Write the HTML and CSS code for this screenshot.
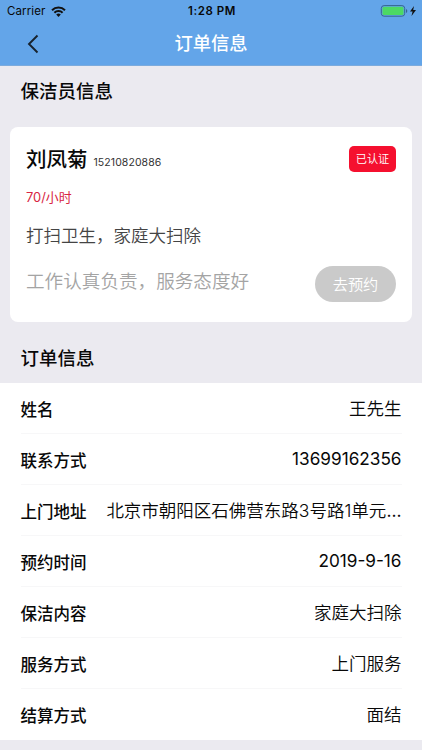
FILE: index.html
```html
<!DOCTYPE html>
<html lang="zh-CN">
<head>
<meta charset="utf-8">
<title>订单信息</title>
<link rel="stylesheet" href="styles.css">
</head>
<body>
<header class="top">
  <div class="status">
    <div class="carrier"><span>Carrier</span>
      <svg width="15" height="11" viewBox="0 0 15 11"><g fill="none" stroke="#111" stroke-width="2"><path d="M1 4.200a9.300 9.300 0 0 1 13 0"/><path d="M3.400 6.800a5.800 5.800 0 0 1 8.200 0"/></g><path d="M5.200 8.600a3.200 3.200 0 0 1 4.600 0L7.500 11z" fill="#111"/></svg>
    </div>
    <div class="time">1:28 PM</div>
    <div class="power">
      <svg width="37" height="12" viewBox="0 0 37 12"><rect x="1.300" y=".6" width="23.400" height="10.600" rx="2.800" fill="none" stroke="#36658f"/><rect x="2.500" y="1.800" width="21" height="8.200" rx="1.600" fill="#4cd964"/><path d="M26 4v4q1.300-.5 1.300-2t-1.300-2z" fill="#36658f"/><path d="M34 1l-4 5.500h2.600L31.500 11l4.500-6h-2.800z" fill="#111"/></svg>
    </div>
  </div>
  <nav class="nav">
    <svg class="back" width="12" height="20" viewBox="0 0 12 20"><path d="M10.500 1.500L2 10l8.500 8.500" fill="none" stroke="#17222d" stroke-width="1.900"/></svg>
    <h1>订单信息</h1>
  </nav>
</header>
<main>
  <h2 class="first">保洁员信息</h2>
  <section class="card">
    <div class="person"><strong>刘凤菊</strong><span class="phone">15210820886</span><span class="badge">已认证</span></div>
    <div class="price">70/小时</div>
    <div class="skill">打扫卫生，家庭大扫除</div>
    <div class="foot"><span class="intro">工作认真负责，服务态度好</span><button>去预约</button></div>
  </section>
  <h2 class="second">订单信息</h2>
  <dl class="list">
    <div class="row"><dt>姓名</dt><dd>王先生</dd></div>
    <div class="row"><dt>联系方式</dt><dd class="number">13699162356</dd></div>
    <div class="row"><dt>上门地址</dt><dd>北京市朝阳区石佛营东路3号路1单元<span class="more">...</span></dd></div>
    <div class="row"><dt>预约时间</dt><dd class="number">2019-9-16</dd></div>
    <div class="row"><dt>保洁内容</dt><dd>家庭大扫除</dd></div>
    <div class="row"><dt>服务方式</dt><dd>上门服务</dd></div>
    <div class="row"><dt>结算方式</dt><dd>面结</dd></div>
  </dl>
</main>
</body>
</html>
```
FILE: styles.css
```css
* { box-sizing: border-box; }
body { margin: 0; height: 750px; overflow: hidden; background: #ebeaf0; color: #080808; font-family: Inter, "Noto Sans CJK SC", sans-serif; }
svg { display: block; }
.top { height: 66px; background: #63a5e9; border-bottom: 1px solid #7cabdd; }
.status { height: 22px; display: grid; grid-template-columns: 1fr auto 1fr; align-items: center; padding: 0 5px 0 7px; font-size: 11.500px; }
.carrier { display: flex; align-items: center; gap: 6px; letter-spacing: .1px; }
.time { font-weight: 600; letter-spacing: .55px; }
.power { justify-self: end; }
.nav { height: 43px; display: grid; grid-template-columns: 40px 1fr 40px; align-items: center; }
.back { margin-left: 27px; }
h1 { margin: 0; color: #fff; text-align: center; font-size: 18.300px; line-height: 43px; font-weight: 500; }
h2 { margin: 0; padding-left: 20.500px; font-size: 18.500px; font-weight: 500; }
.first { height: 60.500px; line-height: 51px; }
.second { height: 61px; line-height: 73px; }
.card { margin: 0 10.500px 0 10px; height: 195.500px; padding: 16.500px 15.500px 0 16px; border-radius: 8px; background: #fff; }
.person { height: 34px; display: flex; align-items: center; }
.person strong { font-size: 20.500px; line-height: 34px; font-weight: 500; }
.phone { margin: 4px auto 0 6px; font-size: 10.500px; letter-spacing: .08px; color: #333; }
.badge { width: 47px; height: 26px; margin-top: -2px; border-radius: 5px; background: #f5102f; color: #fff; text-align: center; font-size: 11.200px; font-weight: 350; line-height: 26px; }
.price { height: 39px; line-height: 41px; color: #d82542; font-size: 12.900px; }
.skill { height: 38px; line-height: 40px; color: #444; font-size: 17.500px; font-weight: 350; }
.foot { display: flex; justify-content: space-between; height: 50px; }
.intro { color: #a4a4a4; font-size: 18.600px; font-weight: 350; line-height: 54px; }
button { width: 81px; height: 36px; margin-top: 12px; padding: 0 0 2px; border: 0; border-radius: 18px; background: #cacaca; color: #fff; font: 350 15.200px "Noto Sans CJK SC", sans-serif; }
.list { margin: 0; height: 357px; background: #fff; }
.row { height: 51px; margin: 0 20.500px; display: flex; align-items: center; justify-content: space-between; border-bottom: 1px solid #f7f7f8; white-space: nowrap; }
.row:last-child { border-color: transparent; }
dt { padding-top: 1px; font-size: 16.500px; font-weight: 500; }
dd { margin: 0; padding-bottom: 1px; font-size: 17.500px; font-weight: 350; }
.number { padding: 0 0 1px; font-size: 17.200px; font-weight: 400; }
.more { font-weight: 400; }
```
